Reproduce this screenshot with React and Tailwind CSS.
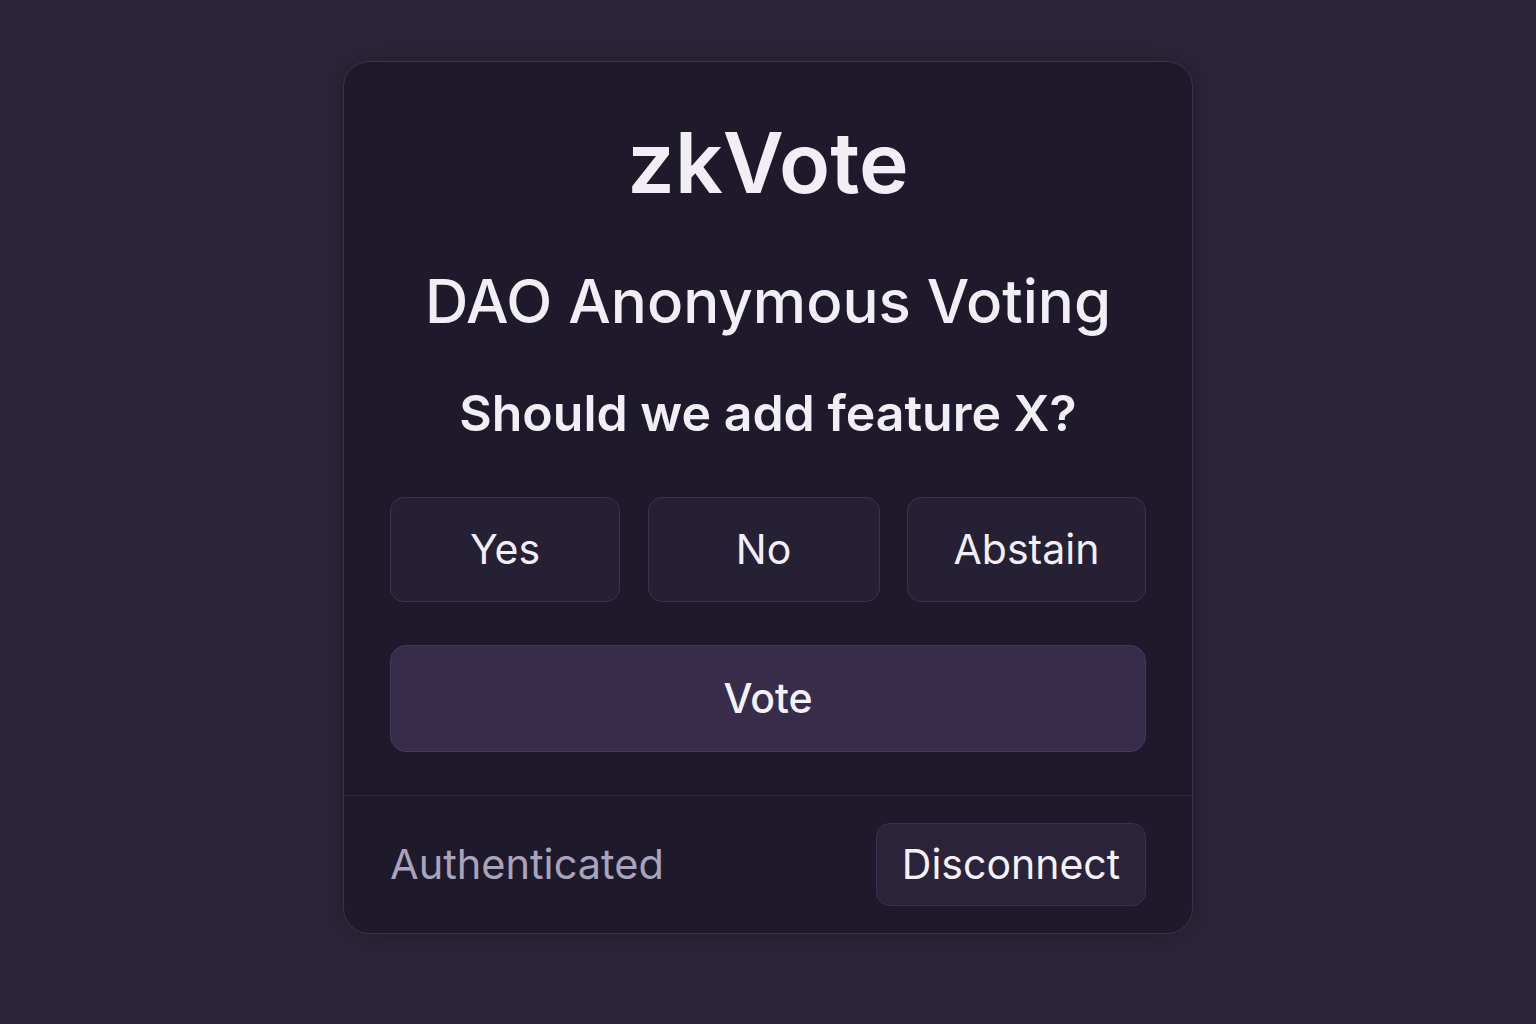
import React, { useState } from "react";

const options = [
  { label: "Yes", width: "w-[230px]" },
  { label: "No", width: "w-[232px]" },
  { label: "Abstain", width: "w-[239px]" },
];

const App = () => {
  const [choice, setChoice] = useState(null);

  return (
    <div
      className="min-h-screen w-full bg-[#2b2539] flex justify-center"
      style={{ fontFamily: "Inter, 'Noto Sans', sans-serif" }}
    >
      <div className="mt-[61px] w-[850px] h-[873px] flex flex-col rounded-[26px] border border-[#3a3350] bg-[#1e1a2c] shadow-[0_0_24px_rgba(0,0,0,0.25)]">
        <div className="flex flex-col items-center px-[46px] pt-[59px] pb-[43px]">
          <h1 className="text-[84px] leading-none font-semibold text-[#f1eff5]">
            zkVote
          </h1>
          <h2 className="mt-[66px] text-[60px] leading-none font-medium text-[#f1eff5]">
            DAO Anonymous Voting
          </h2>
          <p className="mt-[57px] text-[50px] leading-none font-semibold text-[#f1eff5]">
            Should we add feature X?
          </p>
          <div className="mt-[59px] w-full flex justify-between">
            {options.map((opt) => (
              <button
                key={opt.label}
                onClick={() => setChoice(opt.label)}
                className={`h-[105px] ${opt.width} rounded-[14px] border text-[41px] text-[#f1eff5] ${
                  choice === opt.label
                    ? "border-[#6b5a94] bg-[#332a47]"
                    : "border-[#3a3350] bg-[#262035]"
                }`}
              >
                {opt.label}
              </button>
            ))}
          </div>
          <button className="mt-[43px] w-full h-[107px] rounded-[16px] border border-[#443a5c] bg-[#372d4b] text-[41px] font-medium text-[#f4f2f8]">
            Vote
          </button>
        </div>
        <div className="flex-1 flex items-center justify-between border-t border-[#2d2740] px-[46px]">
          <span className="text-[41.5px] text-[#aaa3bc]">Authenticated</span>
          <button className="h-[83px] w-[270px] rounded-[14px] border border-[#3a3350] bg-[#2a2339] text-[41px] text-[#f4f2f8]">
            Disconnect
          </button>
        </div>
      </div>
    </div>
  );
};

export default App;
